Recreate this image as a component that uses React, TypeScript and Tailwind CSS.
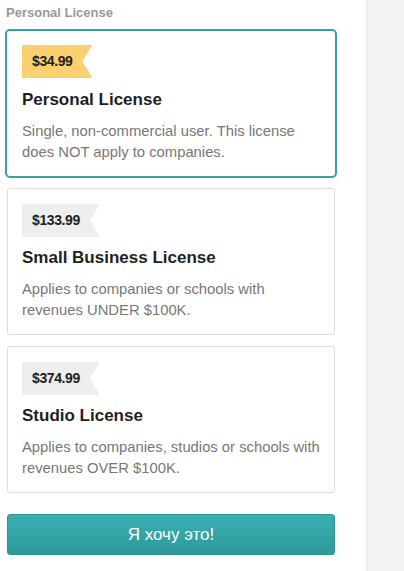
const licenses = [
  {
    price: "$34.99",
    title: "Personal License",
    text: "Single, non-commercial user. This license does NOT apply to companies.",
    selected: true,
  },
  {
    price: "$133.99",
    title: "Small Business License",
    text: "Applies to companies or schools with revenues UNDER $100K.",
    selected: false,
  },
  {
    price: "$374.99",
    title: "Studio License",
    text: "Applies to companies, studios or schools with revenues OVER $100K.",
    selected: false,
  },
];

const App = () => {
  return (
    <div className="flex min-h-[571px] w-[404px] bg-white font-[family-name:'Liberation_Sans',Arial,sans-serif]">
      <div className="w-[366px] shrink-0 pl-[7px]">
        <div className="w-[328px]">
          <h4 className="mt-[4px] mb-[7px] -ml-px text-[13px] leading-[18px] font-bold text-[#999]">
            Personal License
          </h4>

          <div className="flex flex-col gap-[10px]">
            {licenses.map((item, i) => (
              <div
                key={item.title}
                className={`${
                  item.selected
                    ? "-mx-[2px] rounded-[5px] border-2 border-[#3a9fa0] px-[15px] pt-[14px]"
                    : "rounded-[3px] border border-[#dddddd] px-[14px] pt-[15px]"
                } bg-white pb-[13px] ${i === 2 ? "mt-px" : ""}`}
              >
                <div
                  className={`inline-flex h-[33px] items-center pr-[20px] pl-[10px] [clip-path:polygon(0_0,100%_0,calc(100%-10px)_50%,100%_100%,0_100%)] ${
                    item.selected ? "bg-[#fcd070]" : "bg-[#eeeeee]"
                  }`}
                >
                  <span className="text-[14px] font-bold tracking-[-0.4px] text-[#222]">
                    {item.price}
                  </span>
                </div>
                <h3
                  className={`text-[17px] leading-[20px] font-bold text-[#1f1f1f] ${
                    i === 0 ? "mt-[12px]" : "mt-[11px]"
                  }`}
                >
                  {item.title}
                </h3>
                <p className="mt-[11px] -mr-[6px] text-[14.8px] leading-[21px] text-[#777]">
                  {item.text}
                </p>
              </div>
            ))}
          </div>

          <button className="mt-[21px] h-[41px] w-full rounded-[3px] border border-[#2e9494] bg-gradient-to-b from-[#3aaeb2] to-[#2f9a9b] text-[17px] text-white">
            Я хочу это!
          </button>
        </div>
      </div>
      <div className="flex-1 border-l border-[#e8e8e8] bg-[#f3f3f3]" />
    </div>
  );
};

export default App;
